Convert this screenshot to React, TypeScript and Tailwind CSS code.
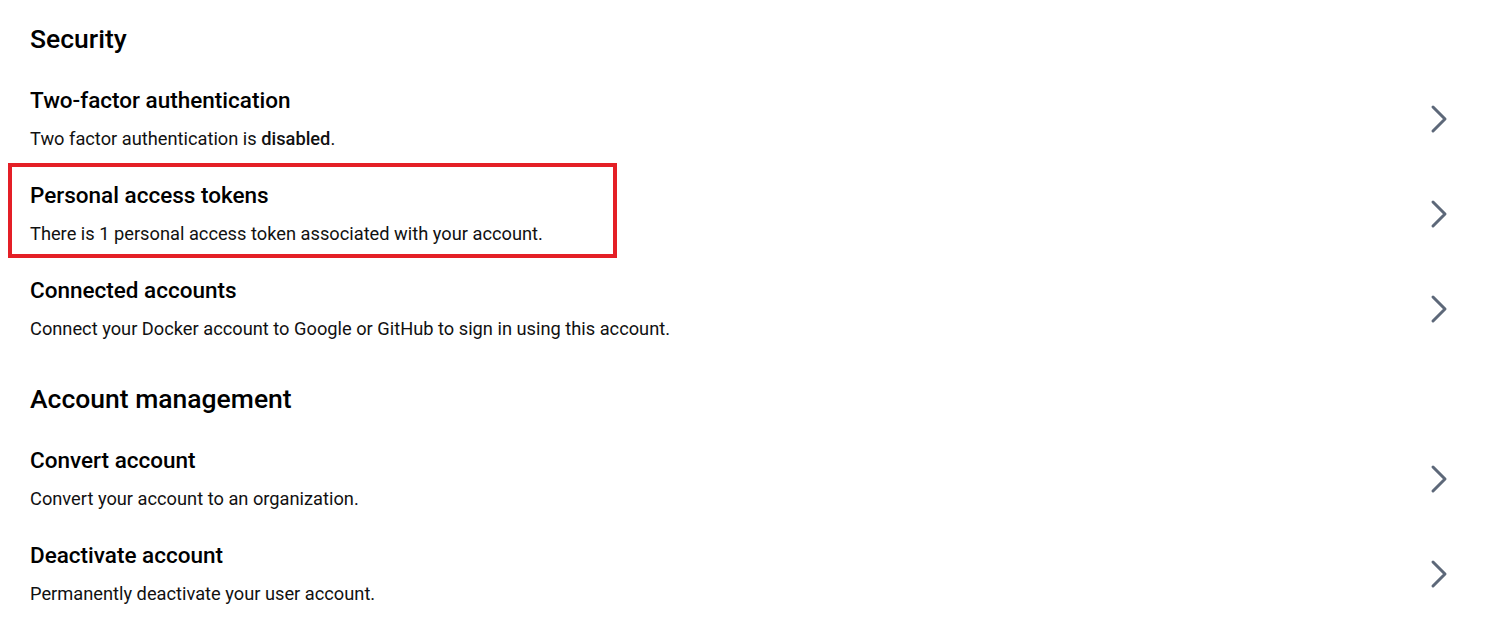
import React from "react";

type Row = {
  title: string;
  desc: React.ReactNode;
  highlight?: boolean;
};

const security: Row[] = [
  {
    title: "Two-factor authentication",
    desc: (
      <>
        Two factor authentication is <span className="font-medium">disabled</span>.
      </>
    ),
  },
  {
    title: "Personal access tokens",
    desc: "There is 1 personal access token associated with your account.",
    highlight: true,
  },
  {
    title: "Connected accounts",
    desc: "Connect your Docker account to Google or GitHub to sign in using this account.",
  },
];

const management: Row[] = [
  { title: "Convert account", desc: "Convert your account to an organization." },
  { title: "Deactivate account", desc: "Permanently deactivate your user account." },
];

function Chevron() {
  return (
    <svg width="18" height="30" viewBox="0 0 18 30" fill="none" className="shrink-0">
      <polyline
        points="3,3 15,15 3,27"
        stroke="#5d6879"
        strokeWidth="3"
        strokeLinecap="round"
        strokeLinejoin="round"
      />
    </svg>
  );
}

function SettingRow({ row }: { row: Row }) {
  return (
    <div className="relative flex items-center justify-between pt-[14px] pb-[16px] pr-[50px] cursor-pointer">
      <div className="flex flex-col">
        <div className="text-[22.5px] leading-[28px] font-medium text-black">{row.title}</div>
        <div className="mt-[13px] text-[18.25px] leading-[24px] text-[#111111]">{row.desc}</div>
      </div>
      <Chevron />
      {row.highlight && (
        <div className="pointer-events-none absolute left-[-22px] top-[-4px] w-[609px] h-[95px] border-4 border-[#e41f26]" />
      )}
    </div>
  );
}

function Section({ title, rows, className }: { title: string; rows: Row[]; className?: string }) {
  return (
    <section className={className}>
      <h2 className="text-[26.5px] leading-[32px] font-medium text-black mb-[17px]">{title}</h2>
      {rows.map((r) => (
        <SettingRow key={r.title} row={r} />
      ))}
    </section>
  );
}

export default function App() {
  return (
    <div
      className="w-full min-h-[622px] bg-white pl-[30px] pt-[23px]"
      style={{ fontFamily: "Roboto, 'Liberation Sans', sans-serif" }}
    >
      <Section title="Security" rows={security} />
      <Section title="Account management" rows={management} className="mt-[26px]" />
    </div>
  );
}
